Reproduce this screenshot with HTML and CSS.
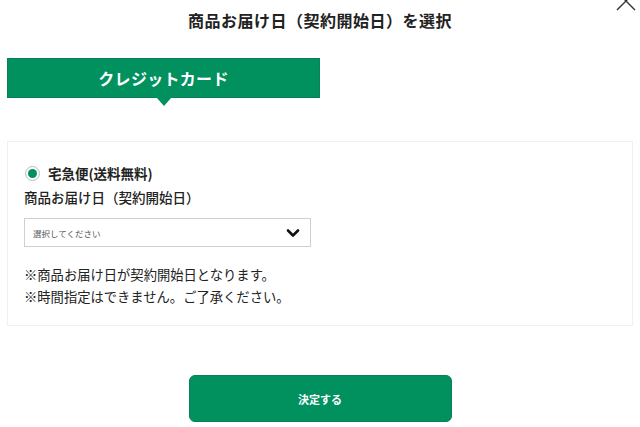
FILE: index.html
```html
<!DOCTYPE html>
<html lang="ja">
	<head>
		<meta charset="UTF-8" />
		<meta name="viewport" content="width=device-width, initial-scale=1.0" />
		<title>商品お届け日（契約開始日）を選択</title>
		<link rel="stylesheet" href="styles.css">
	</head>
	<body>
		<div class="modal">
			<header class="modal-header">
				<h1 class="modal-title">商品お届け日（契約開始日）を選択</h1>
				<button class="close-button" aria-label="閉じる">
					<svg width="22" height="22" viewBox="0 0 22 22">
						<path d="M2 2 L20 20 M20 2 L2 20" stroke="#333" stroke-width="1.4" fill="none" />
					</svg>
				</button>
			</header>

			<div class="tab">
				<div class="tab-label">クレジットカード</div>
			</div>

			<section class="card">
				<label class="radio-row">
					<span class="radio"><span class="radio-dot"></span></span>
					<span class="radio-text">宅急便(送料無料)</span>
				</label>
				<p class="field-label">商品お届け日（契約開始日）</p>
				<div class="select">
					<span class="select-placeholder">選択してください</span>
					<svg class="select-arrow" width="14" height="10" viewBox="0 0 14 10">
						<path d="M2 2.5 L7 7.5 L12 2.5" stroke="#111" stroke-width="2.6" fill="none" stroke-linecap="round" stroke-linejoin="round" />
					</svg>
				</div>
				<div class="notes">
					<p>※商品お届け日が契約開始日となります。</p>
					<p>※時間指定はできません。ご了承ください。</p>
				</div>
			</section>

			<div class="actions">
				<button class="submit-button">決定する</button>
			</div>
		</div>
	</body>
</html>
```

FILE: styles.css
```css
body {
	margin: 0;
	background: #fff;
	color: #222;
	font-family: "Noto Sans CJK JP", "Noto Sans", sans-serif;
}
p {
	margin: 0;
}
.modal {
	width: 640px;
	height: 427px;
	overflow: hidden;
}
.modal-header {
	position: relative;
	padding-top: 8px;
	height: 58px;
	box-sizing: border-box;
}
.modal-title {
	margin: 0;
	text-align: center;
	font-size: 16px;
	line-height: 24px;
	font-weight: 700;
	letter-spacing: 0.5px;
}
.close-button {
	position: absolute;
	top: -10px;
	right: 3px;
	padding: 0;
	border: none;
	background: none;
	width: 22px;
	height: 22px;
}
.tab {
	margin-left: 7px;
	width: 313px;
}
.tab-label {
	position: relative;
	height: 40px;
	box-sizing: border-box;
	background: #00915f;
	border: 1px solid #0b7f55;
	color: #fff;
	font-size: 16px;
	font-weight: 700;
	line-height: 38px;
	text-align: center;
	letter-spacing: 0.3px;
}
.tab-label::after {
	content: "";
	position: absolute;
	left: 148px;
	bottom: -9px;
	border-left: 8px solid transparent;
	border-right: 8px solid transparent;
	border-top: 9px solid #00915f;
}
.card {
	margin: 43px 7px 0;
	border: 1px solid #f0f0f0;
	padding: 21px 16px 17px;
}
.radio-row {
	display: flex;
	align-items: center;
	gap: 8px;
	height: 20px;
}
.radio {
	width: 15px;
	height: 15px;
	box-sizing: border-box;
	border: 1px solid #bbb;
	border-radius: 50%;
	display: flex;
	align-items: center;
	justify-content: center;
	margin-left: 1px;
}
.radio-dot {
	width: 9px;
	height: 9px;
	border-radius: 50%;
	background: #00915f;
}
.radio-text {
	font-size: 13.5px;
	font-weight: 700;
}
.field-label {
	margin-top: 4px;
	font-size: 13.5px;
	line-height: 20px;
	font-weight: 500;
}
.select {
	margin-top: 11px;
	width: 287px;
	height: 29px;
	box-sizing: border-box;
	border: 1px solid #d0d0d0;
	display: flex;
	align-items: center;
	justify-content: space-between;
	padding: 0 10px 0 8px;
}
.select-placeholder {
	font-size: 8.5px;
	color: #555;
}
.notes {
	margin-top: 17px;
	font-size: 13.3px;
	line-height: 22px;
}
.actions {
	display: flex;
	justify-content: center;
	margin-top: 49px;
}
.submit-button {
	width: 263px;
	height: 47px;
	border: 1px solid #0b7f55;
	border-radius: 6px;
	background: #00915f;
	color: #fff;
	font-family: "Noto Sans CJK JP", "Noto Sans", sans-serif;
	font-size: 11px;
	font-weight: 700;
}
```
